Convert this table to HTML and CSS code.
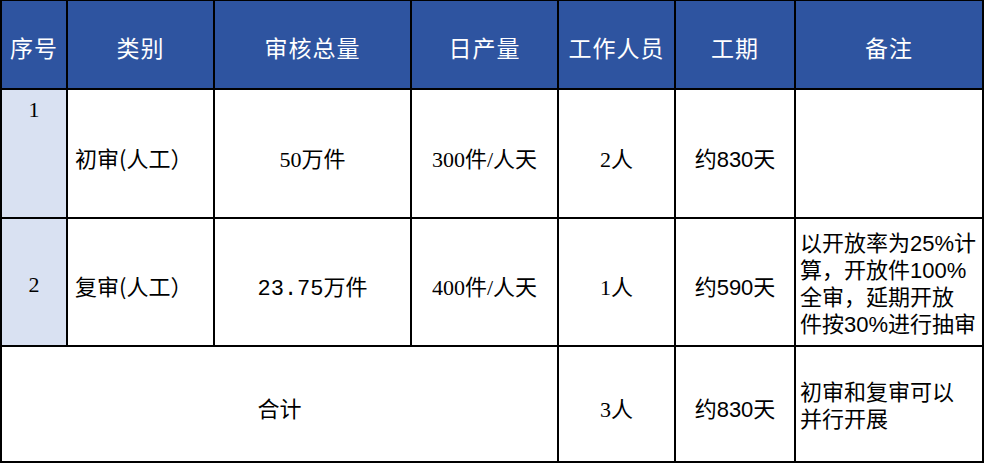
FILE: index.html
```html
<!DOCTYPE html>
<html lang="zh">
<head>
<meta charset="utf-8">
<title>审核工期表</title>
<link rel="stylesheet" href="styles.css">
</head>
<body>
<div class="table">
  <div class="th">序号</div>
  <div class="th">类别</div>
  <div class="th">审核总量</div>
  <div class="th">日产量</div>
  <div class="th">工作人员</div>
  <div class="th">工期</div>
  <div class="th">备注</div>

  <div class="td idx top">1</div>
  <div class="td left">初审(人工）</div>
  <div class="td serif">50万件</div>
  <div class="td serif">300件/人天</div>
  <div class="td serif">2人</div>
  <div class="td">约830天</div>
  <div class="td"></div>

  <div class="td idx serif">2</div>
  <div class="td left">复审(人工）</div>
  <div class="td mono">23.75万件</div>
  <div class="td serif">400件/人天</div>
  <div class="td serif">1人</div>
  <div class="td">约590天</div>
  <div class="td note"><span>以开放率为25%计</span><span>算，开放件100%</span><span>全审，延期开放</span><span>件按30%进行抽审</span></div>

  <div class="td span4">合计</div>
  <div class="td serif">3人</div>
  <div class="td">约830天</div>
  <div class="td note"><span>初审和复审可以</span><span>并行开展</span></div>
</div>
</body>
</html>
```

FILE: styles.css
```css
html, body {
  margin: 0;
  padding: 0;
  background: #ffffff;
}

.table {
  width: 984px;
  height: 463px;
  box-sizing: border-box;
  display: grid;
  grid-template-columns: 64px 145px 195px 145px 115px 118px 186px;
  grid-template-rows: 87px 127px 126px 114px;
  gap: 2px;
  padding: 1px 2px 2px 2px;
  background: #000000;
  font-family: "Liberation Sans", "Noto Sans CJK SC", sans-serif;
  font-size: 22px;
  color: #000000;
}

.th {
  background: #2e54a0;
  color: #ffffff;
  font-family: "Noto Sans CJK SC", sans-serif;
  font-size: 23px;
  display: flex;
  align-items: center;
  justify-content: center;
  padding-top: 5px;
  box-sizing: border-box;
  letter-spacing: 1px;
}

.td {
  background: #ffffff;
  display: flex;
  align-items: center;
  justify-content: center;
  padding-top: 6px;
  box-sizing: border-box;
  white-space: nowrap;
}

.idx {
  background: #d9e1f2;
  font-family: "Liberation Serif", "Noto Sans CJK SC", serif;
}

.top {
  align-items: flex-start;
  padding-top: 7px;
}

.left {
  justify-content: flex-start;
  padding-left: 7px;
  font-family: "Noto Sans CJK SC", sans-serif;
}

.serif {
  font-family: "Liberation Serif", "Noto Sans CJK SC", serif;
}

.mono {
  font-family: "Liberation Mono", "Noto Sans CJK SC", monospace;
}

.span4 {
  grid-column: span 4;
  font-family: "Noto Sans CJK SC", sans-serif;
}

.note {
  flex-direction: column;
  align-items: flex-start;
  justify-content: center;
  padding: 3px 0 0 4px;
  line-height: 27px;
}
```
